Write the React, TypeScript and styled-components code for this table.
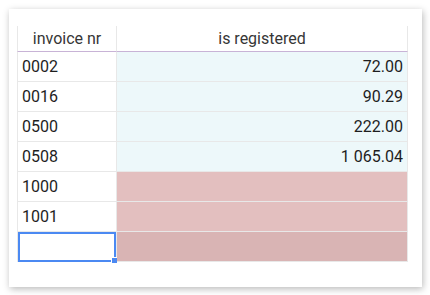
import React from "react";
import styled, { createGlobalStyle } from "styled-components";

const GlobalStyle = createGlobalStyle`
  html, body {
    margin: 0;
    padding: 0;
    background: #ffffff;
    font-family: Roboto, "Liberation Sans", sans-serif;
  }
`;

const Page = styled.div`
  padding: 9px 8px 8px 9px;
`;

const Card = styled.div`
  width: 413px;
  height: 278px;
  box-sizing: border-box;
  background: #ffffff;
  box-shadow: 1px 2px 7px rgba(0, 0, 0, 0.28);
  padding: 17px 14px 0 8px;
`;

const Table = styled.table`
  border-collapse: separate;
  border-spacing: 0;
  table-layout: fixed;
  width: 391px;
  font-size: 16px;
  color: #1e1e1e;
`;

const HeadCell = styled.th<{ $first?: boolean }>`
  height: 25px;
  padding: 0 4px;
  font-weight: 400;
  color: #363636;
  text-align: center;
  border-bottom: 1px solid #c8b3d6;
  border-right: 1px solid #e8e8e8;
  border-left: ${p => (p.$first ? "1px solid #e8e8e8" : "none")};
  background: #ffffff;
  line-height: 25px;
`;

type Tone = "plain" | "ok" | "missing" | "active";

const tones: Record<Tone, string> = {
  plain: "#ffffff",
  ok: "#edf8fa",
  missing: "#e3bfbf",
  active: "#d9b4b4",
};

const Cell = styled.td<{ $first?: boolean; $tone: Tone }>`
  position: relative;
  height: 30px;
  padding: 0 4px;
  box-sizing: border-box;
  background: ${p => tones[p.$tone]};
  text-align: ${p => (p.$first ? "left" : "right")};
  border-bottom: 1px solid #e8e8e8;
  border-right: 1px solid #e8e8e8;
  border-left: ${p => (p.$first ? "1px solid #e8e8e8" : "none")};
  line-height: 29px;
  white-space: nowrap;
`;

const Selection = styled.div`
  position: absolute;
  left: 0;
  top: 0;
  right: 0;
  bottom: -1px;
  border: 2px solid #4b89f2;
  pointer-events: none;
`;

const Handle = styled.div`
  position: absolute;
  right: -4px;
  bottom: -4px;
  width: 5px;
  height: 5px;
  background: #4b89f2;
  border: 1px solid #ffffff;
`;

const rows: { nr: string; amount: string; tone: Tone }[] = [
  { nr: "0002", amount: "72.00", tone: "ok" },
  { nr: "0016", amount: "90.29", tone: "ok" },
  { nr: "0500", amount: "222.00", tone: "ok" },
  { nr: "0508", amount: "1 065.04", tone: "ok" },
  { nr: "1000", amount: "", tone: "missing" },
  { nr: "1001", amount: "", tone: "missing" },
];

export default function App() {
  return (
    <>
      <GlobalStyle />
      <Page>
        <Card>
          <Table>
            <colgroup>
              <col style={{ width: 100 }} />
              <col />
            </colgroup>
            <thead>
              <tr>
                <HeadCell $first>invoice nr</HeadCell>
                <HeadCell>is registered</HeadCell>
              </tr>
            </thead>
            <tbody>
              {rows.map(r => (
                <tr key={r.nr}>
                  <Cell $first $tone="plain">{r.nr}</Cell>
                  <Cell $tone={r.tone}>{r.amount}</Cell>
                </tr>
              ))}
              <tr>
                <Cell $first $tone="plain">
                  <Selection>
                    <Handle />
                  </Selection>
                </Cell>
                <Cell $tone="active" />
              </tr>
            </tbody>
          </Table>
        </Card>
      </Page>
    </>
  );
}
